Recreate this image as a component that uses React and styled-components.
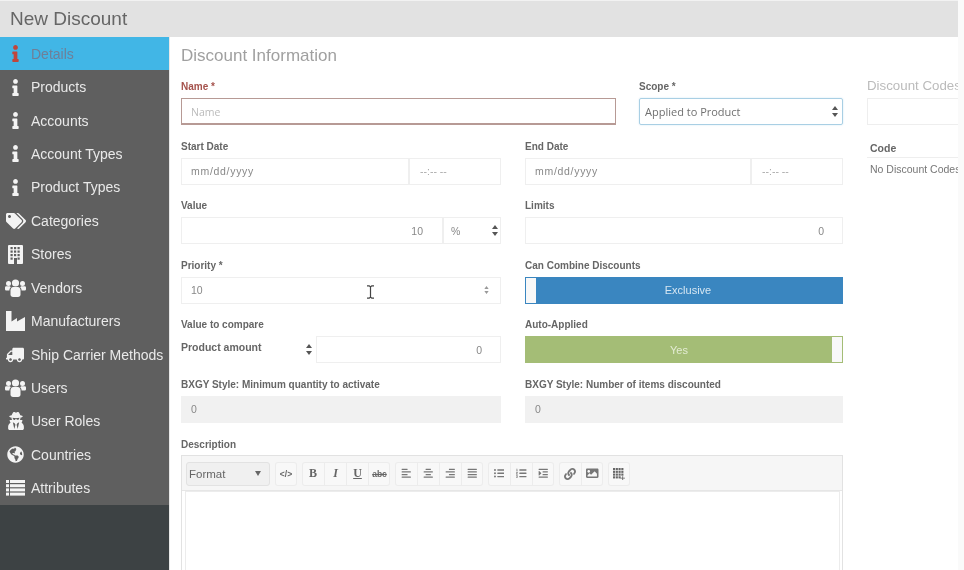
import React from "react";
import styled, { createGlobalStyle } from "styled-components";
import {
  FaInfo, FaTags, FaTruck, FaUserSecret, FaGlobeAmericas,
  FaAlignLeft, FaAlignCenter, FaAlignRight, FaAlignJustify, FaListUl, FaListOl, FaIndent, FaLink, FaImage,
} from "react-icons/fa";

const Global = createGlobalStyle`
  html, body { margin: 0; padding: 0; height: 100%; background: #fff; overflow: hidden; }
  body { font-family: "Liberation Sans", Arial, sans-serif; }
  * { box-sizing: border-box; }
`;

const Page = styled.div`
  width: 964px; height: 570px; overflow: hidden; display: flex; flex-direction: column;
  background: #fff; position: relative; filter: blur(0.45px);
`;
const Header = styled.header`
  height: 37px; flex: none; width: 958px; background: #e2e2e2; border-top: 1px solid #f2f2f2;
  color: #666; font-size: 19px; line-height: 35px; padding-left: 10px;
`;
const Body = styled.div`display: flex; flex: 1; min-height: 0;`;
const Sidebar = styled.nav`
  width: 169px; flex: none; background: #3d4244; display: flex; flex-direction: column;
`;
const NavItem = styled.div`
  height: 33.43px; flex: none; display: flex; align-items: center; font-size: 14px; white-space: nowrap;
  background: ${p => (p.$active ? "#41b6e6" : "#5f5f5f")};
  color: ${p => (p.$active ? "#6f7f98" : "#e9e9e9")};
`;
const NavIcon = styled.span`
  width: 31px; flex: none; display: flex; justify-content: center; align-items: center;
  color: ${p => (p.$active ? "#c0463c" : "#f4f4f4")};
  font-size: ${p => p.$size || 20}px;
  ${p => (p.$flip ? "transform: scaleX(-1);" : "")}
`;
const Main = styled.main`
  flex: none; width: 789px; padding: 0 0 0 11px; overflow: hidden; position: relative;
  border-left: 1px solid #e8e8e8;
`;
const Title = styled.h2`
  margin: 0; font-size: 17px; font-weight: 400; line-height: 20px; color: #a0a0a0; padding-top: 9px; height: 43px;
`;
const TopRow = styled.div`display: flex;`;
const NameCol = styled.div`width: 435px; margin-right: 23px; flex: none;`;
const ScopeCol = styled.div`width: 204px; flex: none;`;
const CodesCol = styled.div`width: 100px; position: absolute; left: 697px; top: 0;`;
const Grid = styled.div`display: grid; grid-template-columns: 320px 318px; column-gap: 24px;`;
const Field = styled.div`height: 59.6px;`;
const Label = styled.label`
  display: block; font-size: 10px; font-weight: 700; line-height: 14px; height: 18px;
  color: ${p => (p.$error ? "#a5524c" : "#666")};
`;
const DescriptionLabel = styled(Label)`height: 17px;`;
const NameInput = styled.input`
  display: block; width: 100%; height: 27px; border: 1px solid #b79a95; outline: none; padding: 2px 9px 0;
  border-bottom-width: 2px; font: 10.5px "Open Sans", "Liberation Sans", sans-serif; background: #fff;
  &::placeholder { color: #bbb; }
`;
const ScopeBox = styled.div`
  height: 27px; display: flex; align-items: center; justify-content: space-between; padding: 0 4px 0 5px;
  border: 1px solid #a9cfe4; border-radius: 2px; box-shadow: 0 0 2px #cfe6f2;
  font: 11px "Open Sans", "Liberation Sans", sans-serif; color: #707070;
`;
const DateRow = styled.div`display: flex;`;
const Control = styled.div`
  height: 27px; display: flex; align-items: center;
  background: ${p => (p.$disabled ? "#f1f1f1" : "#fff")};
  border: 1px solid ${p => (p.$disabled ? "#f1f1f1" : "#efefef")};
  flex: ${p => (p.$grow ? 1 : "none")}; width: ${p => p.$w || "auto"}; padding-left: ${p => p.$pad ?? 9}px;
  font-size: 10.5px; color: ${p => p.$c || "#888"}; letter-spacing: ${p => p.$ls || 0};
  justify-content: ${p => (p.$right ? "flex-end" : "flex-start")}; padding-right: ${p => p.$right || 0}px;
`;
const Arrows = styled.svg`flex: none; display: block; margin-left: auto; margin-right: ${p => p.$mr || 0}px;`;
const Toggle = styled.div`
  height: 27px; position: relative; display: flex; align-items: center; justify-content: center;
  font-size: 11px; color: ${p => p.$fg}; background: ${p => p.$bg};
  padding-right: ${p => (p.$handle === "right" ? 10 : 0)}px; padding-left: ${p => (p.$handle === "left" ? 8 : 0)}px;
`;
const Handle = styled.span`
  position: absolute; top: 1px; bottom: 1px; width: 10px; background: #f8f8f8;
  ${p => (p.$side === "right" ? "right: 1px;" : "left: 1px;")}
`;
const CompareRow = styled.div`display: flex; align-items: flex-start;`;
const CompareSelect = styled.div`
  width: 135px; flex: none; height: 27px; display: flex; align-items: flex-start; padding: 5px 4px 0 0;
  font-size: 10.5px; font-weight: 700; color: #666; line-height: 12px;
`;
const CompareArrows = styled.span`margin-left: auto; padding-top: 3px; display: flex;`;
const Cursor = styled.svg`position: absolute; left: 196px; top: 248px;`;
const Editor = styled.div`width: 662px; height: 200px; border: 1px solid #e2e2e2; background: #fff;`;
const EditorToolbar = styled.div`
  height: 35px; background: #f6f6f6; border-bottom: 1px solid #e6e6e6; padding: 6px 0 0 4px; display: flex; gap: 5px;
`;
const FormatButton = styled.div`
  width: 84px; height: 24px; border: 1px solid #e2e2e2; border-radius: 3px; background: #f0f0f0; display: flex;
  align-items: center; justify-content: space-between; padding: 0 8px 0 2px; font-size: 11.5px; color: #666;
`;
const Caret = styled.span`width: 0; height: 0; border: 3.5px solid transparent; border-top: 5px solid #666; border-bottom: 0;`;
const Group = styled.div`
  height: 24px; display: flex; border-radius: 3px; background: #f8f8f8; box-shadow: inset 0 0 0 1px #ececec;
`;
const ToolButton = styled.span`
  width: 22px; display: flex; align-items: center; justify-content: center; color: #777;
  font-size: ${p => p.$fs || 10.5}px;
  & + & { border-left: 1px solid #ececec; }
`;
const SerifGlyph = styled.span`
  font: ${p => (p.$italic ? "italic " : "")}700 12px "Liberation Serif", serif; color: #666;
  text-decoration: ${p => (p.$under ? "underline" : "none")};
`;
const SmallGlyph = styled.span`
  font-size: 8.5px; font-weight: 700; color: #666;
  text-decoration: ${p => (p.$strike ? "line-through" : "none")};
`;
const EditorArea = styled.div`margin: 0 2px 0 3px; height: 100%; border: 1px solid #ececec; background: #fff;`;
const CodesTitle = styled.div`
  font-size: 13.3px; color: #bbb; white-space: nowrap; line-height: 16px; padding-top: 41px; height: 61px;
`;
const CodesInput = styled.div`height: 27px; border: 1px solid #eee; width: 100%;`;
const CodeHead = styled.div`
  font-size: 10.5px; font-weight: 700; color: #666; padding: 17px 0 0 3px; height: 33px; line-height: 12px;
  border-bottom: 1px solid #eee;
`;
const CodeCell = styled.div`font-size: 10.5px; color: #777; padding: 5px 0 0 3px; white-space: nowrap; line-height: 12px;`;
const ScrollEdge = styled.div`position: absolute; left: 958px; top: 0; bottom: 0; width: 6px; background: #fafafa;`;

const SelectArrows = ({ mr, c = "#555", small }) => (
  <Arrows $mr={mr} width={small ? 5 : 6} height={small ? 8 : 11} viewBox="0 0 6 11">
    <path d="M3 0 6 4H0zM3 11 0 7h6z" fill={c} />
  </Arrows>
);

const UsersIcon = () => (
  <svg width="21" height="18" viewBox="0 0 21 18" fill="currentColor">
    <circle cx="10.500" cy="4" r="3.600" />
    <circle cx="3.500" cy="4.500" r="2.500" />
    <circle cx="17.500" cy="4.500" r="2.500" />
    <path d="M5.500 11.500C5.500 9 7 8 8 8h5c1 0 2.500 1 2.500 3.500v4c0 1.500-1 2.500-2.500 2.500H8c-1.500 0-2.500-1-2.500-2.500z" />
    <path d="M0 8.500C0 7.600.7 7.200 1.500 7.200H5c.3.5.5.8 1 1.100-1 .6-1.600 1.800-1.600 3.200H1.500C.7 11.500 0 11 0 10.200zM21 8.500c0-.9-.7-1.300-1.500-1.300H16c-.3.5-.5.8-1 1.100 1 .6 1.600 1.800 1.600 3.200h2.900c.8 0 1.500-.5 1.500-1.300z" />
  </svg>
);
const BuildingIcon = () => (
  <svg width="15" height="19" viewBox="0 0 15 19">
    <rect width="15" height="19" rx="1" fill="currentColor" />
    <g fill="#5f5f5f">
      {[2, 5.500, 9].flatMap(y => [2.500, 6, 9.500].map(x => <rect key={`${x}-${y}`} x={x} y={y} width="2.200" height="2.200" />))}
      <rect x="2.500" y="12.500" width="2.200" height="2.200" />
      <rect x="9.500" y="12.500" width="2.200" height="2.200" />
      <rect x="6" y="13" width="3" height="6" />
    </g>
  </svg>
);
const FactoryIcon = () => (
  <svg width="19" height="20" viewBox="0 0 19 20" fill="currentColor">
    <path d="M0 0h5.500v10.500L11 7v3.500L19 6v14H0z" />
  </svg>
);
const ListIcon = () => (
  <svg width="19" height="16" viewBox="0 0 19 16" fill="currentColor">
    {[0, 4.200, 8.400, 12.600].map(y => (
      <g key={y}>
        <rect y={y} width="3" height="3" />
        <rect x="4" y={y} width="15" height="3" />
      </g>
    ))}
  </svg>
);
const TableIcon = () => (
  <svg width="12" height="12" viewBox="0 0 13 13" fill="#666">
    {[0, 1, 2, 3].flatMap(r => [0, 1, 2, 3].map(c => (
      r === 3 && c === 3 ? null : <rect key={`${r}${c}`} x={c * 3} y={r * 3} width="2.300" height="2.300" />
    )))}
    <path d="M10 9h1v1.500h2v1h-2V13h-1v-1.500H8v-1h2z" />
  </svg>
);

const nav = [
  ["Details", <FaInfo />, 17],
  ["Products", <FaInfo />, 17],
  ["Accounts", <FaInfo />, 17],
  ["Account Types", <FaInfo />, 17],
  ["Product Types", <FaInfo />, 17],
  ["Categories", <FaTags />, 20],
  ["Stores", <BuildingIcon />],
  ["Vendors", <UsersIcon />],
  ["Manufacturers", <FactoryIcon />],
  ["Ship Carrier Methods", <FaTruck />, 18, true],
  ["Users", <UsersIcon />],
  ["User Roles", <FaUserSecret />, 18],
  ["Countries", <FaGlobeAmericas />, 17],
  ["Attributes", <ListIcon />],
];

export default function App() {
  return (
    <Page>
      <Global />
      <Header>New Discount</Header>
      <Body>
        <Sidebar>
          {nav.map(([label, icon, size, flip], i) => (
            <NavItem key={label} $active={i === 0}>
              <NavIcon $active={i === 0} $size={size} $flip={flip}>{icon}</NavIcon>
              {label}
            </NavItem>
          ))}
        </Sidebar>
        <Main>
          <Title>Discount Information</Title>
          <TopRow>
            <NameCol>
              <Field>
                <Label $error>Name *</Label>
                <NameInput placeholder="Name" />
              </Field>
            </NameCol>
            <ScopeCol>
              <Field>
                <Label>Scope *</Label>
                <ScopeBox>Applied to Product<SelectArrows /></ScopeBox>
              </Field>
            </ScopeCol>
          </TopRow>
          <CodesCol>
            <CodesTitle>Discount Codes</CodesTitle>
            <CodesInput />
            <CodeHead>Code</CodeHead>
            <CodeCell>No Discount Codes</CodeCell>
          </CodesCol>
          <Grid>
            <Field>
              <Label>Start Date</Label>
              <DateRow>
                <Control $grow $ls="0.7px">mm/dd/yyyy</Control>
                <Control $w="92px" $pad={10} $c="#aaa">--:-- --</Control>
              </DateRow>
            </Field>
            <Field>
              <Label>End Date</Label>
              <DateRow>
                <Control $grow $ls="0.7px">mm/dd/yyyy</Control>
                <Control $w="92px" $pad={10} $c="#aaa">--:-- --</Control>
              </DateRow>
            </Field>
            <Field>
              <Label>Value</Label>
              <DateRow>
                <Control $grow $right={19} $w="262px">10</Control>
                <Control $w="58px" $pad={7}>%<SelectArrows mr={2} /></Control>
              </DateRow>
            </Field>
            <Field>
              <Label>Limits</Label>
              <Control $right={18}>0</Control>
            </Field>
            <Field>
              <Label>Priority *</Label>
              <Control>10<SelectArrows mr={11} c="#999" small /></Control>
            </Field>
            <Field>
              <Label>Can Combine Discounts</Label>
              <Toggle $bg="#3a86c0" $fg="#d5e6f2" $handle="left">
                <Handle $side="left" />Exclusive
              </Toggle>
            </Field>
            <Field>
              <Label>Value to compare</Label>
              <CompareRow>
                <CompareSelect>Product amount<CompareArrows><SelectArrows /></CompareArrows></CompareSelect>
                <Control $grow $right={18}>0</Control>
              </CompareRow>
            </Field>
            <Field>
              <Label>Auto-Applied</Label>
              <Toggle $bg="#a4bd76" $fg="#e3ecd3" $handle="right">
                Yes<Handle $side="right" />
              </Toggle>
            </Field>
            <Field>
              <Label>BXGY Style: Minimum quantity to activate</Label>
              <Control $disabled>0</Control>
            </Field>
            <Field>
              <Label>BXGY Style: Number of items discounted</Label>
              <Control $disabled>0</Control>
            </Field>
          </Grid>
          <DescriptionLabel>Description</DescriptionLabel>
          <Editor>
            <EditorToolbar>
              <FormatButton>Format<Caret /></FormatButton>
              <Group><ToolButton><SmallGlyph>&lt;/&gt;</SmallGlyph></ToolButton></Group>
              <Group>
                <ToolButton><SerifGlyph>B</SerifGlyph></ToolButton>
                <ToolButton><SerifGlyph $italic>I</SerifGlyph></ToolButton>
                <ToolButton><SerifGlyph $under>U</SerifGlyph></ToolButton>
                <ToolButton><SmallGlyph $strike>abc</SmallGlyph></ToolButton>
              </Group>
              <Group>
                <ToolButton><FaAlignLeft /></ToolButton>
                <ToolButton><FaAlignCenter /></ToolButton>
                <ToolButton><FaAlignRight /></ToolButton>
                <ToolButton><FaAlignJustify /></ToolButton>
              </Group>
              <Group>
                <ToolButton><FaListUl /></ToolButton>
                <ToolButton><FaListOl /></ToolButton>
                <ToolButton><FaIndent /></ToolButton>
              </Group>
              <Group>
                <ToolButton $fs={12}><FaLink /></ToolButton>
                <ToolButton $fs={12.5}><FaImage /></ToolButton>
              </Group>
              <Group><ToolButton><TableIcon /></ToolButton></Group>
            </EditorToolbar>
            <EditorArea />
          </Editor>
          <Cursor width="9" height="14" viewBox="0 0 9 14" fill="none" stroke="#444" strokeWidth="1.2">
            <path d="M1 .8h2.200L4.500 2 5.800.8H8M4.500 2v10M1 13.200h2.200l1.300-1.200 1.300 1.200H8" />
          </Cursor>
        </Main>
      </Body>
      <ScrollEdge />
    </Page>
  );
}
